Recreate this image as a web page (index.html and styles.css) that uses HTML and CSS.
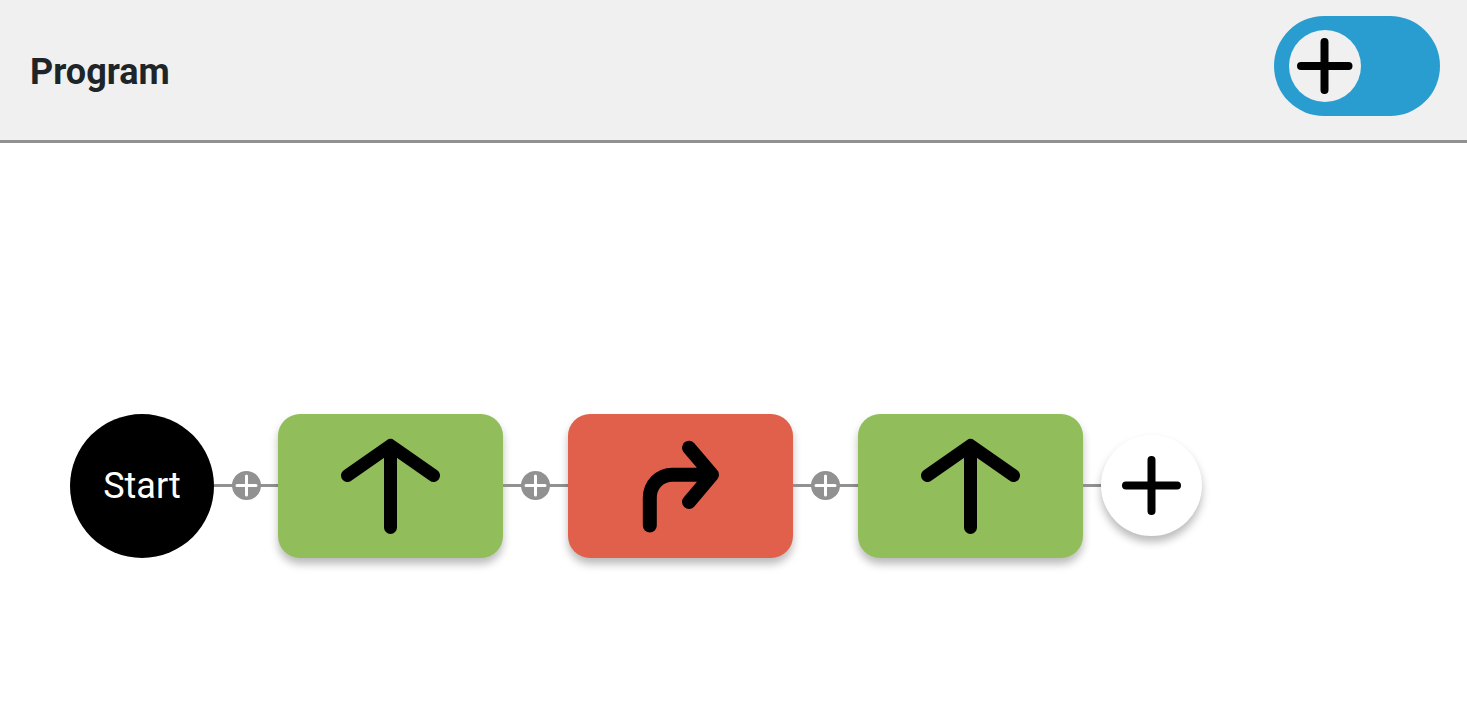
FILE: index.html
```
<!DOCTYPE html>
<html lang="en">
<head>
<meta charset="utf-8">
<title>Program</title>
<link rel="stylesheet" href="styles.css">
</head>
<body>
<header class="header">
  <h1 class="title">Program</h1>
  <button class="switch" type="button" role="switch" aria-checked="false" aria-label="Add mode">
    <span class="knob">
      <svg class="knob-icon" viewBox="0 0 72 72" aria-hidden="true"><path d="M12 36H59.500M35.500 12V60"/></svg>
    </span>
  </button>
</header>
<main class="program">
  <div class="start">Start</div>
  <div class="connector">
    <button class="insert" type="button" aria-label="Insert step 1"><svg viewBox="0 0 29 29" aria-hidden="true"><path d="M5 14.500H24M14.500 5V24"/></svg></button>
  </div>
  <button class="step forward" type="button" aria-label="Forward">
    <svg class="icon-forward" viewBox="0 0 101 96" aria-hidden="true"><path d="M50.500 89.500V7.500M7.500 37.500L50.500 7.500L93.500 37.500"/></svg>
  </button>
  <div class="connector">
    <button class="insert" type="button" aria-label="Insert step 2"><svg viewBox="0 0 29 29" aria-hidden="true"><path d="M5 14.500H24M14.500 5V24"/></svg></button>
  </div>
  <button class="step right" type="button" aria-label="Turn right">
    <svg class="icon-right" viewBox="0 0 81 96" aria-hidden="true"><path d="M9.800 87.500V60C9.800 47 19.500 36.700 32.500 36.700H72M49 9.700L72 36.700L49 64"/></svg>
  </button>
  <div class="connector">
    <button class="insert" type="button" aria-label="Insert step 3"><svg viewBox="0 0 29 29" aria-hidden="true"><path d="M5 14.500H24M14.500 5V24"/></svg></button>
  </div>
  <button class="step forward" type="button" aria-label="Forward">
    <svg class="icon-forward" viewBox="0 0 101 96" aria-hidden="true"><path d="M50.500 89.500V7.500M7.500 37.500L50.500 7.500L93.500 37.500"/></svg>
  </button>
  <div class="connector short"></div>
  <button class="append" type="button" aria-label="Add step">
    <svg viewBox="0 0 101 101" aria-hidden="true"><path d="M25 50.500H76M50.500 25V76"/></svg>
  </button>
</main>
</body>
</html>
```
FILE: styles.css
```
* {
  box-sizing: border-box;
}

body {
  margin: 0;
  background: #fff;
  color: #1d2529;
  font-family: Roboto, "Liberation Sans", sans-serif;
  font-size: 36px;
  line-height: 44px;
}

button {
  flex: none;
  padding: 0;
  border: 0;
  color: #000;
  font: inherit;
  cursor: pointer;
}

svg {
  display: block;
  fill: none;
  stroke: currentColor;
  stroke-linecap: round;
  stroke-linejoin: round;
}

.header {
  display: flex;
  align-items: flex-start;
  justify-content: space-between;
  padding: 16px 27px 24px 30px;
  border-bottom: 3px solid #919191;
  background: #f0f0f0;
}

.title {
  margin: 0;
  padding-top: 34px;
  font-size: 36px;
  font-weight: 700;
}

.switch {
  display: flex;
  width: 166px;
  height: 100px;
  padding: 14px 15px;
  border-radius: 50px;
  background: #2a9dd0;
}

.knob {
  width: 72px;
  height: 72px;
  border-radius: 50%;
  background: #f0f0f0;
}

.knob-icon {
  stroke-width: 8px;
}

.program {
  display: flex;
  align-items: center;
  padding: 271px 70px 40px;
}

.start {
  display: flex;
  flex: none;
  align-items: center;
  justify-content: center;
  width: 144px;
  height: 144px;
  border-radius: 50%;
  background: #000;
  color: #fff;
}

.connector {
  display: flex;
  flex: none;
  align-items: flex-start;
  justify-content: center;
  width: 65px;
  height: 30px;
  background: linear-gradient(#919191, #919191) 0 13px / 100% 3px no-repeat;
}

.start + .connector {
  width: 64px;
}

.connector.short {
  width: 18px;
}

.insert {
  width: 29px;
  height: 29px;
  border-radius: 50%;
  background: #919191;
  color: #fff;
}

.insert svg {
  stroke-width: 3px;
}

.step {
  display: flex;
  align-items: center;
  justify-content: center;
  width: 225px;
  height: 144px;
  border-radius: 22px;
  box-shadow: 0 6px 8px rgba(0, 0, 0, 0.27);
}

.forward {
  background: #91be5a;
}

.right {
  background: #e0604c;
}

.icon-forward {
  width: 101px;
  height: 96px;
  stroke-width: 13px;
}

.icon-right {
  width: 81px;
  height: 96px;
  stroke-width: 14px;
}

.append {
  width: 101px;
  height: 101px;
  margin-bottom: 1px;
  border-radius: 50%;
  background: #fff;
  box-shadow: 0 6px 8px rgba(0, 0, 0, 0.27);
}

.append svg {
  stroke-width: 8px;
}
```
